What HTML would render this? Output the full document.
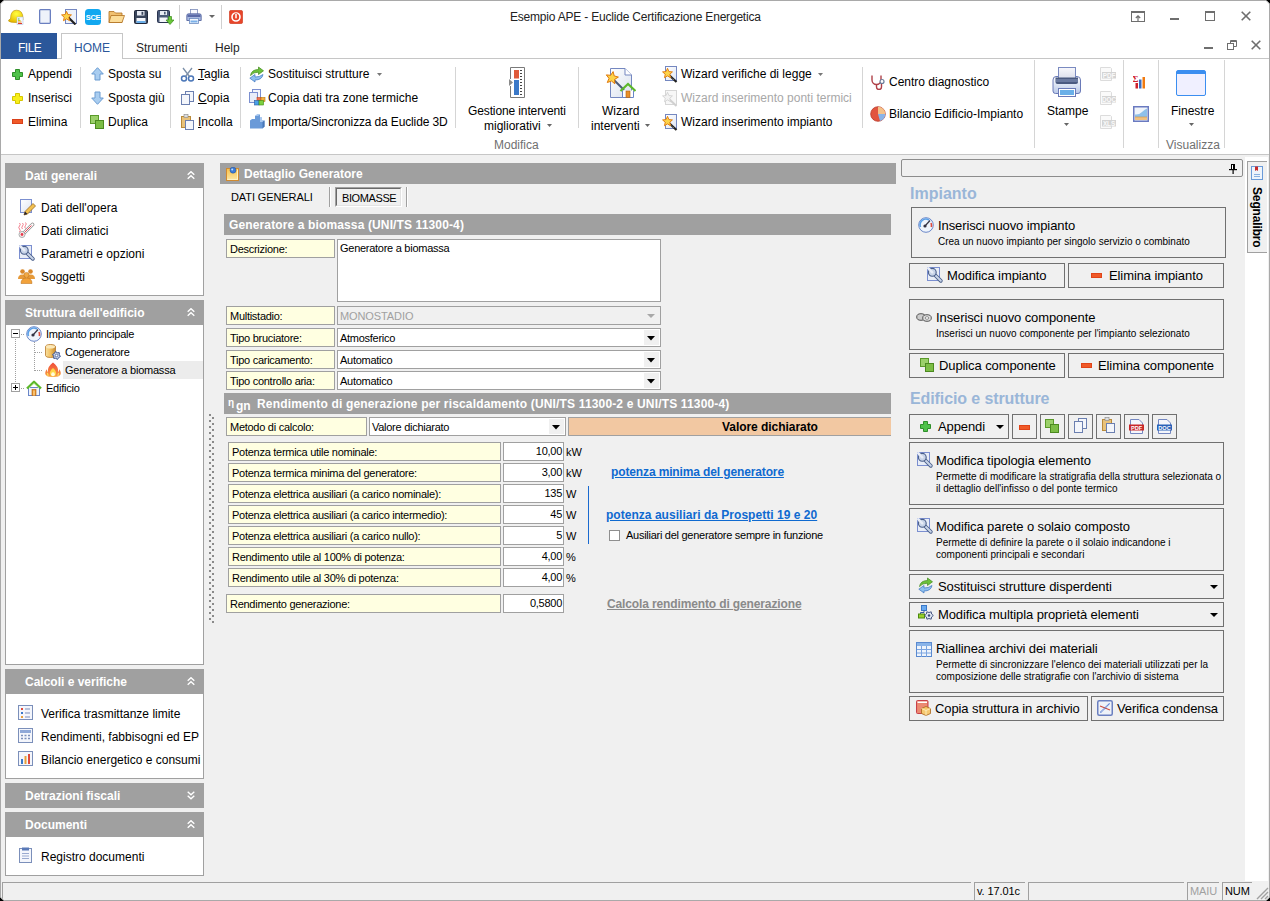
<!DOCTYPE html>
<html><head><meta charset="utf-8"><style>
html,body{margin:0;padding:0;}
body{width:1270px;height:901px;overflow:hidden;position:relative;background:#fff;font-family:"Liberation Sans", sans-serif;}
.a{position:absolute;box-sizing:border-box;}
.t{white-space:nowrap;}
</style></head><body>
<div class="a" style="left:0px;top:0px;width:1270px;height:901px;background:#fff;"></div>
<div class="a" style="left:1px;top:155px;width:1268px;height:746px;background:#f0f0f0;"></div>
<div class="a" style="left:1px;top:154px;width:1268px;height:1px;background:#c6c6c6;"></div>
<div class="a" style="left:0px;top:0px;width:1px;height:901px;background:#a9a9a9;"></div>
<div class="a" style="left:1269px;top:0px;width:1px;height:901px;background:#a9a9a9;"></div>
<div class="a" style="left:0px;top:0px;width:1270px;height:1px;background:#a9a9a9;"></div>
<div class="a" style="left:0px;top:900px;width:1270px;height:1px;background:#a9a9a9;"></div>
<div class="a t" style="left:510px;top:11px;font-size:12px;line-height:12px;color:#222;letter-spacing:-0.2px;">Esempio APE - Euclide Certificazione Energetica</div>
<svg class="a" style="left:8px;top:9px" width="16" height="16" viewBox="0 0 16 16"><defs><radialGradient id="hg" cx=".55" cy=".3" r=".7"><stop offset="0" stop-color="#ffff40"/><stop offset="1" stop-color="#e8b800"/></radialGradient></defs><path d="M.5 12 Q.5 10.5 2.5 10 Q2.5 1.2 8.5 1.2 Q15 1.2 15 9.5 L15 11 Q13 13.5 8 13.5 Q2 13.5 .5 12Z" fill="url(#hg)" stroke="#b89000" stroke-width=".6"/><rect x="9" y="8" width="6" height="7.5" fill="#f4f8ff" stroke="#a8b8d8" stroke-width=".5"/><rect x="10" y="9.5" width="1.5" height="1" fill="#3ab040"/><rect x="10" y="11" width="2.5" height="1" fill="#c8d020"/><rect x="10" y="12.5" width="3.5" height="1" fill="#f08a20"/><rect x="10" y="14" width="4" height="1" fill="#e03a2a"/></svg>
<svg class="a" style="left:39px;top:9px" width="12" height="15" viewBox="0 0 12 15"><rect x=".65" y=".65" width="10.7" height="13.7" rx=".8" fill="#eef2fa" stroke="#6a7fc0" stroke-width="1.3"/></svg>
<svg class="a" style="left:61px;top:9px" width="16" height="16" viewBox="0 0 16 16"><rect x="4.5" y=".5" width="11" height="14" fill="#eef2fa" stroke="#7487c0"/><path d="M7.5 8.5 L14.5 15.5" stroke="#222" stroke-width="2.2"/><path d="M5.50 2.30 L6.91 5.56 L10.45 5.89 L7.78 8.24 L8.56 11.71 L5.50 9.90 L2.44 11.71 L3.22 8.24 L0.55 5.89 L4.09 5.56Z" fill="#fcd34a" stroke="#e0780a" stroke-width=".9"/></svg>
<svg class="a" style="left:85px;top:9px" width="16" height="16" viewBox="0 0 16 16"><rect width="16" height="16" rx="3.5" fill="#12a8f0"/><text x="8" y="11.3" font-size="7.5" font-weight="bold" text-anchor="middle" fill="#fff" font-family="Liberation Sans" letter-spacing="-.3">SCE</text></svg>
<svg class="a" style="left:108px;top:10px" width="17" height="13" viewBox="0 0 17 13"><path d="M1 1.5 H6 L7.5 3 H14 V12.5 H1Z" fill="#f0c070" stroke="#b07020" stroke-width=".8"/><path d="M3 5.5 H16.5 L14 12.5 H1Z" fill="#fbdc98" stroke="#b07020" stroke-width=".8"/></svg>
<svg class="a" style="left:134px;top:10px" width="14" height="14" viewBox="0 0 14 14"><rect x=".5" y=".5" width="13" height="13" rx="1" fill="#38445a" stroke="#20283a"/><rect x="3" y="1" width="7.5" height="4.5" fill="#e8ecf4"/><rect x="7.5" y="1.8" width="1.8" height="3" fill="#38445a"/><rect x="2.5" y="8" width="9" height="5" fill="#f4f6fa"/><rect x="2.5" y="11" width="9" height="2" fill="#6aaee8"/></svg>
<svg class="a" style="left:157px;top:10px" width="17" height="15" viewBox="0 0 17 15"><rect x=".5" y=".5" width="12" height="12" rx="1" fill="#4a5a78" stroke="#2a3450"/><rect x="3" y="1" width="7" height="4" fill="#e8ecf4"/><rect x="7" y="1.8" width="1.6" height="2.6" fill="#4a5a78"/><rect x="2.5" y="7.5" width="8" height="4.5" fill="#f4f6fa"/><path d="M11.5 6.5 V10 H9 L13 14.5 L17 10 H14.5 V6.5Z" fill="#6ac83a" stroke="#3a8a1a" stroke-width=".7"/></svg>
<div class="a" style="left:179px;top:5px;width:1px;height:24px;background:#d0d0d0;"></div>
<svg class="a" style="left:186px;top:9px" width="16" height="15" viewBox="0 0 16 15"><rect x="4.5" y=".5" width="7" height="5" fill="#f8faff" stroke="#7a8ab8" stroke-width=".8"/><path d="M.8 6.5 Q.8 4.8 2.5 4.8 H13.5 Q15.2 4.8 15.2 6.5 V11.5 H.8Z" fill="#a8b8e0" stroke="#4a5a98" stroke-width=".8"/><rect x="1.5" y="5.5" width="13" height="2.5" fill="#5a6aa8"/><rect x="3.5" y="9.5" width="9" height="5" fill="#f4f8ff" stroke="#6a8ac0" stroke-width=".8"/><rect x="4.5" y="11.5" width="7" height="2" fill="#7ab0e8"/></svg>
<svg class="a" style="left:209px;top:14px" width="7" height="5" viewBox="0 0 7 5"><path d="M0 1 L6 1 L3 4Z" fill="#666"/></svg>
<div class="a" style="left:221px;top:5px;width:1px;height:24px;background:#d0d0d0;"></div>
<svg class="a" style="left:229px;top:10px" width="14" height="14" viewBox="0 0 14 14"><rect x=".3" y=".3" width="13.4" height="13.4" rx="2" fill="#e8452a" stroke="#c83a20" stroke-width=".6"/><circle cx="7" cy="7" r="4" fill="none" stroke="#fff" stroke-width="1.6"/><rect x="6" y="3.5" width="2" height="5" fill="#fff" stroke="#e8452a" stroke-width=".5"/></svg>
<svg class="a" style="left:1131px;top:11px" width="14" height="11" viewBox="0 0 14 11"><rect x=".5" y=".5" width="13" height="10" fill="none" stroke="#6e6e6e"/><rect x="1" y="1" width="12" height="1" fill="#6e6e6e"/><path d="M7 10 V5 M4.8 7 L7 4.8 L9.2 7" stroke="#6e6e6e" fill="none" stroke-width="1.2"/></svg>
<div class="a" style="left:1170px;top:18px;width:9px;height:2px;background:#6e6e6e;"></div>
<svg class="a" style="left:1205px;top:11px" width="10" height="10" viewBox="0 0 10 10"><rect x=".5" y=".5" width="9" height="9" fill="none" stroke="#6e6e6e"/><rect x="0" y="0" width="10" height="2" fill="#6e6e6e"/></svg>
<svg class="a" style="left:1241px;top:11px" width="10" height="10" viewBox="0 0 10 10"><path d="M.7 .7 L9.3 9.3 M9.3 .7 L.7 9.3" stroke="#6e6e6e" stroke-width="1.6"/></svg>
<div class="a" style="left:1204px;top:47px;width:9px;height:2px;background:#6e6e6e;"></div>
<svg class="a" style="left:1227px;top:40px" width="10" height="10" viewBox="0 0 10 10"><rect x=".5" y="3.5" width="6" height="6" fill="none" stroke="#6e6e6e"/><path d="M3.5 3 V.5 H9.5 V6.5 H7" fill="none" stroke="#6e6e6e"/><path d="M3.5 1.5 H9.5" stroke="#6e6e6e"/></svg>
<svg class="a" style="left:1251px;top:40px" width="10" height="10" viewBox="0 0 10 10"><path d="M.7 .7 L9.3 9.3 M9.3 .7 L.7 9.3" stroke="#6e6e6e" stroke-width="1.6"/></svg>
<div class="a" style="left:1px;top:33px;width:56px;height:26px;background:#2b579a;"></div>
<div class="a t" style="left:18px;top:42px;font-size:12px;line-height:12px;color:#fff;letter-spacing:-0.5px;">FILE</div>
<div class="a" style="left:61px;top:33px;width:62px;height:26px;border:1px solid #c6c6c6;border-bottom:none;background:#fff;"></div>
<div class="a" style="left:57px;top:58px;width:5px;height:1px;background:#c6c6c6;"></div>
<div class="a" style="left:123px;top:58px;width:1146px;height:1px;background:#c6c6c6;"></div>
<div class="a t" style="left:74px;top:42px;font-size:12px;line-height:12px;color:#2b579a;">HOME</div>
<div class="a t" style="left:136px;top:42px;font-size:12px;line-height:12px;color:#262626;">Strumenti</div>
<div class="a t" style="left:215px;top:42px;font-size:12px;line-height:12px;color:#262626;">Help</div>
<svg class="a" style="left:12px;top:69px" width="11" height="11" viewBox="0 0 11 11"><path d="M3.5 .5 H7.5 V3.5 H10.5 V7.5 H7.5 V10.5 H3.5 V7.5 H.5 V3.5 H3.5Z" fill="#4fc24a" stroke="#2f8f2a"/></svg>
<div class="a t" style="left:28px;top:68px;font-size:12px;line-height:12px;color:#000;">Appendi</div>
<svg class="a" style="left:12px;top:93px" width="11" height="11" viewBox="0 0 11 11"><path d="M3.5 .5 H7.5 V3.5 H10.5 V7.5 H7.5 V10.5 H3.5 V7.5 H.5 V3.5 H3.5Z" fill="#f7ef1a" stroke="#d6c600"/></svg>
<div class="a t" style="left:28px;top:92px;font-size:12px;line-height:12px;color:#000;">Inserisci</div>
<svg class="a" style="left:12px;top:119px" width="11" height="5" viewBox="0 0 11 5"><rect x=".5" y=".5" width="10" height="4" fill="#f05a28" stroke="#d9401a"/></svg>
<div class="a t" style="left:28px;top:116px;font-size:12px;line-height:12px;color:#000;">Elimina</div>
<div class="a" style="left:80px;top:67px;width:1px;height:61px;background:#d5d5d5;"></div>
<svg class="a" style="left:91px;top:67px" width="13" height="14" viewBox="0 0 13 14"><path d="M6.5 .7 L12.3 7 H9 V13 H4 V7 H.7Z" fill="#a9cdf0" stroke="#6a9bd1"/></svg>
<div class="a t" style="left:108px;top:68px;font-size:12px;line-height:12px;color:#000;">Sposta su</div>
<svg class="a" style="left:91px;top:91px" width="13" height="14" viewBox="0 0 13 14"><path d="M6.5 13.3 L12.3 7 H9 V1 H4 V7 H.7Z" fill="#a9cdf0" stroke="#6a9bd1"/></svg>
<div class="a t" style="left:108px;top:92px;font-size:12px;line-height:12px;color:#000;">Sposta giù</div>
<svg class="a" style="left:90px;top:115px" width="14" height="14" viewBox="0 0 14 14"><rect x=".5" y=".5" width="8" height="8" fill="#9bd06a" stroke="#5a9a2a"/><rect x="5.5" y="5.5" width="8" height="8" fill="#7cbd45" stroke="#4c8a20"/></svg>
<div class="a t" style="left:108px;top:116px;font-size:12px;line-height:12px;color:#000;">Duplica</div>
<div class="a" style="left:170px;top:67px;width:1px;height:61px;background:#d5d5d5;"></div>
<svg class="a" style="left:180px;top:67px" width="15" height="15" viewBox="0 0 15 15"><circle cx="4" cy="11.5" r="2.5" fill="none" stroke="#4a76b8" stroke-width="1.5"/><circle cx="11" cy="11.5" r="2.5" fill="none" stroke="#4a76b8" stroke-width="1.5"/><path d="M5.5 9.5 L12 1 M9.5 9.5 L3 1" stroke="#7b8fa8" stroke-width="1.3"/></svg>
<div class="a t" style="left:198px;top:68px;font-size:12px;line-height:12px;color:#000;"><u>T</u>aglia</div>
<svg class="a" style="left:181px;top:91px" width="13" height="14" viewBox="0 0 13 14"><rect x="4.5" y=".5" width="8" height="10" fill="#f4f6fb" stroke="#6b7fb0"/><rect x=".5" y="3.5" width="8" height="10" fill="#f4f6fb" stroke="#6b7fb0"/></svg>
<div class="a t" style="left:198px;top:92px;font-size:12px;line-height:12px;color:#000;"><u>C</u>opia</div>
<svg class="a" style="left:181px;top:114px" width="13" height="16" viewBox="0 0 13 16"><rect x=".5" y="2.5" width="9" height="11" fill="#e9c27a" stroke="#b98a3a"/><rect x="3" y=".5" width="4" height="3" fill="#ddd" stroke="#888" stroke-width=".6"/><rect x="4.5" y="6.5" width="8" height="9" fill="#f4f6fb" stroke="#6b7fb0"/></svg>
<div class="a t" style="left:198px;top:116px;font-size:12px;line-height:12px;color:#000;"><u>I</u>ncolla</div>
<div class="a" style="left:240px;top:67px;width:1px;height:61px;background:#d5d5d5;"></div>
<svg class="a" style="left:249px;top:66px" width="16" height="17" viewBox="0 0 16 17"><path d="M1.5 9.5 Q2.5 3.5 9.5 3.5 V1 L14.5 4.8 L9.5 8.5 V6.2 Q4.5 6 1.5 9.5Z" fill="#6cc23a" stroke="#3f8a1a" stroke-width=".7"/><path d="M14 8.5 Q13 14 6 14 V16 L.8 12.2 L6 8.5 V11 Q10.5 11.2 14 8.5Z" fill="#8ec0ee" stroke="#3a72c0" stroke-width=".7"/></svg>
<div class="a t" style="left:268px;top:68px;font-size:12px;line-height:12px;color:#000;">Sostituisci strutture</div>
<svg class="a" style="left:377px;top:73px" width="5" height="3" viewBox="0 0 5 3"><path d="M0 0 L5 0 L2.5 3Z" fill="#777"/></svg>
<svg class="a" style="left:249px;top:89px" width="17" height="17" viewBox="0 0 17 17"><rect x="3.5" y=".5" width="8" height="10" fill="#f4f6fb" stroke="#7b8fd0"/><rect x=".5" y="3.5" width="8" height="10" fill="#e8edf8" stroke="#7b8fd0"/><rect x="8" y="8.5" width="4" height="4" fill="#f07050" stroke="#b84a20" stroke-width=".6"/><rect x="12" y="8.5" width="4" height="4" fill="#f4b040" stroke="#b87a10" stroke-width=".6"/><rect x="5.5" y="11.5" width="4.5" height="4.5" fill="#4aa0e8" stroke="#2a5aa0" stroke-width=".6"/><rect x="10" y="11.5" width="4.5" height="4.5" fill="#7cd040" stroke="#3a8a10" stroke-width=".6"/></svg>
<div class="a t" style="left:268px;top:92px;font-size:12px;line-height:12px;color:#000;">Copia dati tra zone termiche</div>
<svg class="a" style="left:249px;top:114px" width="17" height="15" viewBox="0 0 17 15"><path d="M1 14.5 V6.5 L3 5 H6 V2 L8 .5 H11 V3.5 L13 3.5 V6.5 L15.5 6.5 V12.5 L13.5 14.5Z" fill="#6a9ad8"/><path d="M6 5 V2 L8 .5 H11 L9 2 H6 M13 6.5 L15.5 6.5 L13.5 8 H11 V3.5 L13 3.5" fill="#a8c8f0"/><path d="M13.5 8 V14.5 L15.5 12.5 V6.5Z" fill="#4a78b8"/></svg>
<div class="a t" style="left:268px;top:116px;font-size:12px;line-height:12px;color:#000;letter-spacing:-0.14px;">Importa/Sincronizza da Euclide 3D</div>
<div class="a" style="left:455px;top:67px;width:1px;height:61px;background:#d5d5d5;"></div>
<svg class="a" style="left:508px;top:67px" width="18" height="31" viewBox="0 0 18 31"><path d="M2.5 12 V.5 H16.5 V30.5 H2.5 V19" fill="#fff" stroke="#7a7a7a"/><rect x="6" y="3" width="5" height="8.5" fill="#e05a3a"/><rect x="6" y="13" width="5" height="15" fill="#3a78c8"/><rect x="12" y="3" width="2" height="1" fill="#444"/><rect x="12" y="6" width="2" height="1" fill="#444"/><rect x="12" y="9" width="2" height="1" fill="#444"/><rect x="12" y="12" width="2" height="1" fill="#444"/><rect x="12" y="15" width="2" height="1" fill="#444"/><rect x="12" y="18" width="2" height="1" fill="#444"/><rect x="12" y="21" width="2" height="1" fill="#444"/><rect x="12" y="24" width="2" height="1" fill="#444"/><rect x="12" y="27" width="2" height="1" fill="#444"/><path d="M1 12 L5 15.5 L1 19Z" fill="#8a8a8a"/></svg>
<div class="a t" style="left:468px;top:105px;font-size:12px;line-height:12px;color:#000;letter-spacing:-0.12px;">Gestione interventi</div>
<div class="a t" style="left:484px;top:120px;font-size:12px;line-height:12px;color:#000;">migliorativi</div>
<svg class="a" style="left:547px;top:124px" width="5" height="3" viewBox="0 0 5 3"><path d="M0 0 L5 0 L2.5 3Z" fill="#666"/></svg>
<div class="a t" style="left:494px;top:139px;font-size:12px;line-height:12px;color:#707070;">Modifica</div>
<div class="a" style="left:578px;top:67px;width:1px;height:61px;background:#d5d5d5;"></div>
<svg class="a" style="left:603px;top:67px" width="33" height="31" viewBox="0 0 33 31"><defs><linearGradient id="dg" x1="0" y1="0" x2="1" y2="1"><stop offset="0" stop-color="#fff"/><stop offset="1" stop-color="#d8e0ee"/></linearGradient></defs><path d="M7.5 1.5 H22 L28.5 8 V30.5 H7.5Z" fill="url(#dg)" stroke="#7487c0"/><path d="M22 1.5 V8 H28.5" fill="#fff" stroke="#7487c0"/><path d="M11 13 L21 23" stroke="#4a5a7a" stroke-width="2"/><path d="M10.1 4.6 L11.2 8.9 L15.4 10.1 L11.6 12.4 L11.8 16.8 L8.5 14.0 L4.3 15.5 L6.0 11.4 L3.3 7.9 L7.7 8.3Z" fill="#fcd34a" stroke="#e0780a" stroke-width="1"/><path d="M19.5 23.5 V30.5 H30.5 V23.5" fill="#fff" stroke="#6a86c8"/><path d="M17.5 24 L25 17 L32.5 24" fill="none" stroke="#5cb82a" stroke-width="2.2"/><rect x="23" y="24" width="4" height="6.5" fill="#e8902a" stroke="#b06010" stroke-width=".6"/></svg>
<div class="a t" style="left:602px;top:105px;font-size:12px;line-height:12px;color:#000;">Wizard</div>
<div class="a t" style="left:591px;top:120px;font-size:12px;line-height:12px;color:#000;">interventi</div>
<svg class="a" style="left:645px;top:124px" width="5" height="3" viewBox="0 0 5 3"><path d="M0 0 L5 0 L2.5 3Z" fill="#666"/></svg>
<svg class="a" style="left:662px;top:66px" width="16" height="17" viewBox="0 0 16 17"><defs><linearGradient id="wg" x1="0" y1="0" x2="1" y2="1"><stop offset="0" stop-color="#fff"/><stop offset="1" stop-color="#dfe6f4"/></linearGradient></defs><rect x="3.5" y=".5" width="11" height="14" fill="url(#wg)" stroke="#7487c0"/><path d="M7 9 L14.5 16" stroke="#222" stroke-width="2.2"/><path d="M8.5 10.5 L9.2 11.2 M10.8 12.8 L11.5 13.5" stroke="#bbb" stroke-width="1"/><path d="M5.50 2.30 L6.91 5.56 L10.45 5.89 L7.78 8.24 L8.56 11.71 L5.50 9.90 L2.44 11.71 L3.22 8.24 L0.55 5.89 L4.09 5.56Z" fill="#fcd34a" stroke="#e0780a" stroke-width=".9"/></svg>
<div class="a t" style="left:681px;top:68px;font-size:12px;line-height:12px;color:#000;">Wizard verifiche di legge</div>
<svg class="a" style="left:818px;top:73px" width="5" height="3" viewBox="0 0 5 3"><path d="M0 0 L5 0 L2.5 3Z" fill="#777"/></svg>
<svg class="a" style="left:662px;top:90px" width="16" height="17" viewBox="0 0 16 17"><rect x="3.5" y=".5" width="11" height="14" fill="#f7f7f7" stroke="#d6d6d6"/><path d="M7 9 L14.5 16" stroke="#d0d0d0" stroke-width="2"/><path d="M5.50 2.30 L6.91 5.56 L10.45 5.89 L7.78 8.24 L8.56 11.71 L5.50 9.90 L2.44 11.71 L3.22 8.24 L0.55 5.89 L4.09 5.56Z" fill="#f2f2f2" stroke="#cfcfcf" stroke-width=".8"/></svg>
<div class="a t" style="left:681px;top:92px;font-size:12px;line-height:12px;color:#a8a8a8;">Wizard inserimento ponti termici</div>
<svg class="a" style="left:662px;top:114px" width="16" height="17" viewBox="0 0 16 17"><defs><linearGradient id="wg" x1="0" y1="0" x2="1" y2="1"><stop offset="0" stop-color="#fff"/><stop offset="1" stop-color="#dfe6f4"/></linearGradient></defs><rect x="3.5" y=".5" width="11" height="14" fill="url(#wg)" stroke="#7487c0"/><path d="M7 9 L14.5 16" stroke="#222" stroke-width="2.2"/><path d="M8.5 10.5 L9.2 11.2 M10.8 12.8 L11.5 13.5" stroke="#bbb" stroke-width="1"/><path d="M5.50 2.30 L6.91 5.56 L10.45 5.89 L7.78 8.24 L8.56 11.71 L5.50 9.90 L2.44 11.71 L3.22 8.24 L0.55 5.89 L4.09 5.56Z" fill="#fcd34a" stroke="#e0780a" stroke-width=".9"/></svg>
<div class="a t" style="left:681px;top:116px;font-size:12px;line-height:12px;color:#000;">Wizard inserimento impianto</div>
<div class="a" style="left:862px;top:67px;width:1px;height:61px;background:#d5d5d5;"></div>
<svg class="a" style="left:870px;top:74px" width="16" height="16" viewBox="0 0 16 16"><path d="M2 1.5 V6 A4.5 4.5 0 0 0 11 6 V1.5" fill="none" stroke="#b04048" stroke-width="1.4"/><path d="M6.5 10.5 V13 A2.5 2.5 0 0 0 11.5 13 V9" fill="none" stroke="#b04048" stroke-width="1.4"/><circle cx="12" cy="7.5" r="2" fill="#fff" stroke="#6a7b99" stroke-width="1.2"/></svg>
<div class="a t" style="left:889px;top:76px;font-size:12px;line-height:12px;color:#000;">Centro diagnostico</div>
<svg class="a" style="left:870px;top:106px" width="16" height="16" viewBox="0 0 16 16"><circle cx="8" cy="8" r="7.3" fill="#e2553f" stroke="#b83a2a" stroke-width=".8"/><path d="M8 8 V.7 A7.3 7.3 0 0 1 15.3 8Z" fill="#f4c28a"/><path d="M8 8 H15.3 A7.3 7.3 0 0 1 10 15Z" fill="#8ab4e8"/></svg>
<div class="a t" style="left:889px;top:108px;font-size:12px;line-height:12px;color:#000;">Bilancio Edificio-Impianto</div>
<div class="a" style="left:1034px;top:60px;width:1px;height:88px;background:#d5d5d5;"></div>
<svg class="a" style="left:1051px;top:66px" width="32" height="32" viewBox="0 0 32 32"><defs><linearGradient id="pb" x1="0" y1="0" x2="0" y2="1"><stop offset="0" stop-color="#ffffff"/><stop offset="1" stop-color="#b8c8e8"/></linearGradient><linearGradient id="pp" x1="0" y1="0" x2="0" y2="1"><stop offset="0" stop-color="#f8f8fc"/><stop offset="1" stop-color="#d8dcea"/></linearGradient></defs><path d="M2 14 Q2 10.5 5 10.5 H26 Q29.5 10.5 29.5 14 V25 Q29.5 27.5 27 27.5 H4.5 Q2 27.5 2 25Z" fill="url(#pb)" stroke="#6a7ab8"/><rect x="7.5" y="1.5" width="17" height="12" fill="url(#pp)" stroke="#7a8ac0"/><path d="M4.5 11.5 H27 V16 Q27 18 25 18 H6.5 Q4.5 18 4.5 16Z" fill="#4a5a80"/><rect x="5" y="13" width="22" height="3" fill="#6a7aa0"/><rect x="7.5" y="22.5" width="17" height="8" fill="#fff" stroke="#6a7ab8"/><rect x="9" y="24" width="14" height="5" fill="#6ab0e8"/></svg>
<div class="a t" style="left:1047px;top:105px;font-size:12px;line-height:12px;color:#000;">Stampe</div>
<svg class="a" style="left:1064px;top:123px" width="5" height="3" viewBox="0 0 5 3"><path d="M0 0 L5 0 L2.5 3Z" fill="#666"/></svg>
<svg class="a" style="left:1100px;top:67px" width="16" height="15" viewBox="0 0 16 15"><path d="M.5 .5 H10.5 L11.5 1.5 V13.5 H.5Z" fill="#fafafa" stroke="#dcdcdc"/><rect x="2" y="5" width="14" height="6.5" fill="#d4d4d4"/><text x="9" y="10.6" font-size="6.3" font-weight="bold" text-anchor="middle" fill="#fafafa" font-family="Liberation Sans">PDF</text></svg>
<svg class="a" style="left:1100px;top:91px" width="16" height="15" viewBox="0 0 16 15"><path d="M.5 .5 H10.5 L11.5 1.5 V13.5 H.5Z" fill="#fafafa" stroke="#dcdcdc"/><rect x="2" y="5" width="14" height="6.5" fill="#d4d4d4"/><text x="9" y="10.6" font-size="6.3" font-weight="bold" text-anchor="middle" fill="#fafafa" font-family="Liberation Sans">DOC</text></svg>
<svg class="a" style="left:1100px;top:115px" width="16" height="15" viewBox="0 0 16 15"><path d="M.5 .5 H10.5 L11.5 1.5 V13.5 H.5Z" fill="#fafafa" stroke="#dcdcdc"/><rect x="2" y="5" width="14" height="6.5" fill="#d4d4d4"/><text x="9" y="10.6" font-size="6.3" font-weight="bold" text-anchor="middle" fill="#fafafa" font-family="Liberation Sans">XLS</text></svg>
<div class="a" style="left:1123px;top:60px;width:1px;height:88px;background:#d5d5d5;"></div>
<svg class="a" style="left:1133px;top:75px" width="16" height="14" viewBox="0 0 16 14"><text x="-.5" y="7" font-size="9" font-weight="bold" fill="#d0202a" font-family="Liberation Serif">Σ</text><rect x="2.5" y="8" width="2.5" height="5.5" fill="#d0202a"/><rect x="6" y="4.5" width="2.5" height="9" fill="#3a6cc0"/><rect x="9.5" y="2" width="2.5" height="11.5" fill="#f07a10"/></svg>
<svg class="a" style="left:1133px;top:106px" width="16" height="16" viewBox="0 0 16 16"><rect x=".75" y=".75" width="14.5" height="14.5" fill="#f0f4fa" stroke="#6a7ac0" stroke-width="1.5"/><path d="M2 14 V8.5 Q6 9 9 6 Q12 3 14 2.5 V14Z" fill="#8ec0ea"/><path d="M2 11 H14 V14 H2Z" fill="#f0c080"/><path d="M2 11 H14" stroke="#d09040" stroke-width=".6"/></svg>
<div class="a" style="left:1158px;top:60px;width:1px;height:88px;background:#d5d5d5;"></div>
<svg class="a" style="left:1176px;top:70px" width="30" height="26" viewBox="0 0 30 26"><rect x=".5" y=".5" width="29" height="25" rx="1.5" fill="#f0f0ff" stroke="#3b8ef0"/><rect x="1" y="1" width="28" height="3" fill="#3b8ef0"/></svg>
<div class="a t" style="left:1171px;top:105px;font-size:12px;line-height:12px;color:#000;">Finestre</div>
<svg class="a" style="left:1189px;top:123px" width="5" height="3" viewBox="0 0 5 3"><path d="M0 0 L5 0 L2.5 3Z" fill="#666"/></svg>
<div class="a t" style="left:1166px;top:139px;font-size:12px;line-height:12px;color:#707070;">Visualizza</div>
<div class="a" style="left:1224px;top:60px;width:1px;height:88px;background:#d5d5d5;"></div>
<div class="a" style="left:5px;top:163px;width:199px;height:25px;background:#a0a0a0;"></div>
<div class="a t" style="left:25px;top:170px;font-size:12px;line-height:12px;color:#fff;font-weight:bold;">Dati generali</div>
<svg class="a" style="left:187px;top:171px" width="8" height="9" viewBox="0 0 8 9"><path d="M.7 3.7 L4 .7 L7.3 3.7 M.7 7.7 L4 4.7 L7.3 7.7" fill="none" stroke="#fff" stroke-width="1.4"/></svg>
<div class="a" style="left:5px;top:188px;width:199px;height:108px;background:#fff;border:1px solid #a0a0a0;border-top:none;"></div>
<svg class="a" style="left:19px;top:199px" width="17" height="17" viewBox="0 0 17 17"><defs><linearGradient id="pg" x1="0" y1="0" x2="1" y2="1"><stop offset="0" stop-color="#fff"/><stop offset="1" stop-color="#dde4f2"/></linearGradient></defs><rect x="1.5" y=".5" width="11" height="13" fill="url(#pg)" stroke="#7b8fd0"/><path d="M5 16 L6 12.5 L14 4.5 L16.5 7 L8.5 15Z" fill="#f2c050" stroke="#9a6a20" stroke-width=".8"/><path d="M5 16 L6 12.5 L8.5 15Z" fill="#223"/></svg>
<div class="a t" style="left:41px;top:202px;font-size:12px;line-height:12px;color:#000;">Dati dell'opera</div>
<svg class="a" style="left:18px;top:222px" width="17" height="16" viewBox="0 0 17 16"><path d="M4 13 L14.5 2.5" stroke="#8a8a8a" stroke-width="3.6" stroke-linecap="round"/><path d="M4 13 L14.5 2.5" stroke="#fff" stroke-width="2.2" stroke-linecap="round"/><path d="M4 13 L13.5 3.5" stroke="#e83a4a" stroke-width=".9"/><circle cx="4" cy="12.5" r="3" fill="#f4f4f4" stroke="#999" stroke-width=".8"/><circle cx="4" cy="12.5" r="1.4" fill="#e83a4a"/><path d="M1.5 1 Q3 2.5 1.5 4 Q0 5.5 1.5 7 Q3 8.5 1.5 10 M4.5 1 Q6 2.5 4.5 4 Q3 5.5 4.5 7 M7.5 .5 Q9 2 7.5 3.5 Q6 5 7.5 6.5" stroke="#f06070" fill="none" stroke-width=".8"/></svg>
<div class="a t" style="left:41px;top:225px;font-size:12px;line-height:12px;color:#000;">Dati climatici</div>
<svg class="a" style="left:19px;top:245px" width="16" height="16" viewBox="0 0 16 16"><rect x=".5" y=".5" width="12" height="13" fill="#e8edf7" stroke="#7b8fd0"/><path d="M7.5 7.5 L13.8 13.8" stroke="#4a5f8a" stroke-width="3.8" stroke-linecap="round"/><path d="M7.5 7.5 L13.8 13.8" stroke="#c8d4e8" stroke-width="2" stroke-linecap="round"/><circle cx="5.3" cy="5.3" r="3.9" fill="#c8d4e8" stroke="#4a5f8a" stroke-width="1.1"/><path d="M1.2 1.2 L5.3 5.3" stroke="#e8edf7" stroke-width="2.4" stroke-linecap="round"/></svg>
<div class="a t" style="left:41px;top:248px;font-size:12px;line-height:12px;color:#000;">Parametri e opzioni</div>
<svg class="a" style="left:18px;top:268px" width="17" height="16" viewBox="0 0 17 16"><circle cx="4.5" cy="3.5" r="2.3" fill="#d9882a"/><circle cx="12.5" cy="3.5" r="2.3" fill="#d9882a"/><path d="M0 11 Q0 6.5 4.5 6.5 Q8 6.5 8 11Z M9 11 Q9 6.5 12.5 6.5 Q17 6.5 17 11Z" fill="#e69a3a"/><circle cx="8.5" cy="7" r="2.6" fill="#f0a844" stroke="#b86a10" stroke-width=".5"/><path d="M3 15.5 Q3 10 8.5 10 Q14 10 14 15.5Z" fill="#f2a23a" stroke="#b86a10" stroke-width=".5"/></svg>
<div class="a t" style="left:41px;top:271px;font-size:12px;line-height:12px;color:#000;">Soggetti</div>
<div class="a" style="left:5px;top:300px;width:199px;height:25px;background:#a0a0a0;"></div>
<div class="a t" style="left:25px;top:307px;font-size:12px;line-height:12px;color:#fff;font-weight:bold;">Struttura dell'edificio</div>
<svg class="a" style="left:187px;top:308px" width="8" height="9" viewBox="0 0 8 9"><path d="M.7 3.7 L4 .7 L7.3 3.7 M.7 7.7 L4 4.7 L7.3 7.7" fill="none" stroke="#fff" stroke-width="1.4"/></svg>
<div class="a" style="left:5px;top:325px;width:199px;height:340px;background:#fff;border:1px solid #a0a0a0;border-top:none;"></div>
<div class="a" style="left:11px;top:329px;width:9px;height:9px;border:1px solid #a0a0a0;background:#fff;"></div>
<div class="a" style="left:13px;top:333px;width:5px;height:1px;background:#000;"></div>
<div class="a" style="left:11px;top:383px;width:9px;height:9px;border:1px solid #a0a0a0;background:#fff;"></div>
<div class="a" style="left:13px;top:387px;width:5px;height:1px;background:#000;"></div>
<div class="a" style="left:15px;top:385px;width:1px;height:5px;background:#000;"></div>
<div class="a" style="left:15px;top:339px;width:1px;height:44px;background-image:repeating-linear-gradient(to bottom,#a0a0a0 0 1px,transparent 1px 2px);"></div>
<div class="a" style="left:21px;top:334px;width:4px;height:1px;background-image:repeating-linear-gradient(to right,#a0a0a0 0 1px,transparent 1px 2px);"></div>
<div class="a" style="left:21px;top:388px;width:4px;height:1px;background-image:repeating-linear-gradient(to right,#a0a0a0 0 1px,transparent 1px 2px);"></div>
<div class="a" style="left:34px;top:342px;width:1px;height:29px;background-image:repeating-linear-gradient(to bottom,#a0a0a0 0 1px,transparent 1px 2px);"></div>
<div class="a" style="left:35px;top:352px;width:8px;height:1px;background-image:repeating-linear-gradient(to right,#a0a0a0 0 1px,transparent 1px 2px);"></div>
<div class="a" style="left:35px;top:370px;width:8px;height:1px;background-image:repeating-linear-gradient(to right,#a0a0a0 0 1px,transparent 1px 2px);"></div>
<svg class="a" style="left:26px;top:326px" width="16" height="16" viewBox="0 0 16 16"><circle cx="8" cy="8" r="7.3" fill="#eef4fc" stroke="#6a86c8" stroke-width="1"/><path d="M2.5 10 A5.8 5.8 0 0 1 11 3" fill="none" stroke="#5aa0e8" stroke-width="1.6"/><path d="M13 6 A5.8 5.8 0 0 1 13.3 10" fill="none" stroke="#e04a3a" stroke-width="1.6"/><path d="M7 9 L12 3.5" stroke="#334" stroke-width="1.2"/><circle cx="7" cy="9" r="1.6" fill="#334"/></svg>
<div class="a t" style="left:46px;top:329px;font-size:11px;line-height:11px;color:#000;letter-spacing:-0.22px;">Impianto principale</div>
<svg class="a" style="left:45px;top:344px" width="16" height="16" viewBox="0 0 16 16"><defs><linearGradient id="cg" x1="0" x2="1"><stop offset="0" stop-color="#f8e0a0"/><stop offset=".5" stop-color="#f2c060"/><stop offset="1" stop-color="#c88a30"/></linearGradient></defs><path d="M.5 3 Q.5 .5 5.5 .5 Q10.5 .5 10.5 3 V11.5 Q10.5 13.5 5.5 13.5 Q.5 13.5 .5 11.5Z" fill="url(#cg)" stroke="#b8782a" stroke-width=".8"/><ellipse cx="5.5" cy="2.8" rx="4.6" ry="1.8" fill="#fbe8b8"/><path d="M15.4 12.5 L13.6 13.6 L12.5 15.4 L10.7 14.3 L8.7 14.3 L8.7 12.3 L7.6 10.5 L9.4 9.4 L10.5 7.6 L12.3 8.7 L14.3 8.7 L14.3 10.7Z" fill="#c8d4ea" stroke="#3a5290" stroke-width="1"/><circle cx="11.5" cy="11.5" r="1.3" fill="#fff" stroke="#3a5290" stroke-width=".7"/></svg>
<div class="a t" style="left:65px;top:347px;font-size:11px;line-height:11px;color:#000;letter-spacing:-0.22px;">Cogeneratore</div>
<div class="a" style="left:63px;top:361px;width:140px;height:18px;background:#ececec;"></div>
<svg class="a" style="left:45px;top:362px" width="16" height="15" viewBox="0 0 16 15"><defs><linearGradient id="fg" x1="0" y1="0" x2="0" y2="1"><stop offset="0" stop-color="#f04a3a"/><stop offset="1" stop-color="#f8a040"/></linearGradient></defs><path d="M8 0.5 Q14 5 13 10.5 Q14.5 8.5 14 7 Q16.5 10 15.5 12.5 Q14.5 15 8 15 Q1.5 15 .5 12.5 Q-.5 10 2 7 Q1.5 8.5 3 10.5 Q2 5 8 0.5Z" fill="url(#fg)"/><path d="M8 6 Q11.5 9 11 12 Q10.5 14.5 8 14.5 Q5.5 14.5 5 12 Q4.5 9 8 6Z" fill="#ffd84a"/><ellipse cx="8" cy="12.3" rx="1.8" ry="2" fill="#fffbe0"/><path d="M2.3 11 Q3.3 13 2.8 14" stroke="#ffe060" stroke-width="1.2" fill="none"/><path d="M13.7 11 Q12.7 13 13.2 14" stroke="#ffe060" stroke-width="1.2" fill="none"/></svg>
<div class="a t" style="left:65px;top:365px;font-size:11px;line-height:11px;color:#000;letter-spacing:-0.22px;">Generatore a biomassa</div>
<svg class="a" style="left:26px;top:380px" width="16" height="16" viewBox="0 0 16 16"><rect x="2.5" y="7.5" width="11" height="8" fill="#eef3fb" stroke="#6a86c8"/><path d="M1 8.5 L8 1.8 L15 8.5" fill="none" stroke="#5cb82a" stroke-width="2.4" stroke-linejoin="round"/><path d="M3 8 L8 3.3 L13 8" fill="none" stroke="#b8e890" stroke-width=".8"/><rect x="6" y="9.5" width="4" height="6" fill="#e8902a" stroke="#b06010" stroke-width=".6"/><rect x="7" y="10.5" width="2" height="5" fill="#f6c070"/></svg>
<div class="a t" style="left:46px;top:383px;font-size:11px;line-height:11px;color:#000;letter-spacing:-0.22px;">Edificio</div>
<div class="a" style="left:5px;top:669px;width:199px;height:25px;background:#a0a0a0;"></div>
<div class="a t" style="left:25px;top:676px;font-size:12px;line-height:12px;color:#fff;font-weight:bold;">Calcoli e verifiche</div>
<svg class="a" style="left:187px;top:677px" width="8" height="9" viewBox="0 0 8 9"><path d="M.7 3.7 L4 .7 L7.3 3.7 M.7 7.7 L4 4.7 L7.3 7.7" fill="none" stroke="#fff" stroke-width="1.4"/></svg>
<div class="a" style="left:5px;top:694px;width:199px;height:85px;background:#fff;border:1px solid #a0a0a0;border-top:none;"></div>
<svg class="a" style="left:18px;top:705px" width="16" height="16" viewBox="0 0 16 16"><rect x=".5" y=".5" width="14" height="14" fill="#f4f6fc" stroke="#7b8fba"/><rect x="3" y="3" width="2" height="2" fill="#e04a3a"/><rect x="3" y="7" width="2" height="2" fill="#3a78c8"/><rect x="3" y="11" width="2" height="2" fill="#e8a03a"/><path d="M7 4 H12 M7 8 H12 M7 12 H12" stroke="#7b8fba"/></svg>
<div class="a t" style="left:41px;top:708px;font-size:12px;line-height:12px;color:#000;">Verifica trasmittanze limite</div>
<svg class="a" style="left:18px;top:728px" width="16" height="16" viewBox="0 0 16 16"><rect x=".5" y=".5" width="14" height="14" fill="#f4f6fc" stroke="#7b8fba"/><rect x="2" y="2" width="11" height="3" fill="#8fa8d8"/><path d="M3 7.5 H5 M6.5 7.5 H8.5 M10 7.5 H12 M3 10.5 H5 M6.5 10.5 H8.5 M10 10.5 H12" stroke="#7b8fba" stroke-width="1.5"/></svg>
<div class="a t" style="left:41px;top:731px;font-size:12px;line-height:12px;color:#000;">Rendimenti, fabbisogni ed EP</div>
<svg class="a" style="left:18px;top:751px" width="16" height="16" viewBox="0 0 16 16"><rect x=".5" y=".5" width="14" height="14" fill="#f4f6fc" stroke="#7b8fba"/><rect x="3" y="8" width="2" height="5" fill="#3a78c8"/><rect x="6.5" y="5" width="2" height="8" fill="#e8a03a"/><rect x="10" y="3" width="2" height="10" fill="#e04a3a"/></svg>
<div class="a t" style="left:41px;top:754px;font-size:12px;line-height:12px;color:#000;">Bilancio energetico e consumi</div>
<div class="a" style="left:5px;top:783px;width:199px;height:25px;background:#a0a0a0;"></div>
<div class="a t" style="left:25px;top:790px;font-size:12px;line-height:12px;color:#fff;font-weight:bold;">Detrazioni fiscali</div>
<svg class="a" style="left:187px;top:791px" width="8" height="9" viewBox="0 0 8 9"><path d="M.7 .7 L4 3.7 L7.3 .7 M.7 4.7 L4 7.7 L7.3 4.7" fill="none" stroke="#fff" stroke-width="1.4"/></svg>
<div class="a" style="left:5px;top:812px;width:199px;height:25px;background:#a0a0a0;"></div>
<div class="a t" style="left:25px;top:819px;font-size:12px;line-height:12px;color:#fff;font-weight:bold;">Documenti</div>
<svg class="a" style="left:187px;top:820px" width="8" height="9" viewBox="0 0 8 9"><path d="M.7 3.7 L4 .7 L7.3 3.7 M.7 7.7 L4 4.7 L7.3 7.7" fill="none" stroke="#fff" stroke-width="1.4"/></svg>
<div class="a" style="left:5px;top:837px;width:199px;height:39px;background:#fff;border:1px solid #a0a0a0;border-top:none;"></div>
<svg class="a" style="left:19px;top:847px" width="14" height="16" viewBox="0 0 14 16"><rect x=".5" y="1.5" width="12" height="14" fill="#f4f6fc" stroke="#7b8fba"/><rect x="3" y=".5" width="7" height="3" fill="#5a7ab8"/><path d="M3 6.5 H10 M3 9 H10 M3 11.5 H10" stroke="#9aaad0"/></svg>
<div class="a t" style="left:41px;top:851px;font-size:12px;line-height:12px;color:#000;">Registro documenti</div>
<div class="a" style="left:220px;top:163px;width:676px;height:21px;background:#a0a0a0;"></div>
<svg class="a" style="left:226px;top:167px" width="14" height="14" viewBox="0 0 14 14"><defs><linearGradient id="ng" x1="0" y1="0" x2="0" y2="1"><stop offset="0" stop-color="#f8c048"/><stop offset="1" stop-color="#fbe8a8"/></linearGradient></defs><rect x=".5" y="1.5" width="12" height="12" fill="url(#ng)" stroke="#d08a30"/><path d="M1.5 12.5 H11.5 V2.5" fill="none" stroke="#fff6d0" stroke-width=".8"/><circle cx="7" cy="3.2" r="3" fill="#3a7ad8" stroke="#1a4a98" stroke-width=".5"/><circle cx="6.2" cy="2.5" r="1" fill="#bfe0ff"/></svg>
<div class="a t" style="left:244px;top:168px;font-size:12px;line-height:12px;color:#fff;font-weight:bold;">Dettaglio Generatore</div>
<div class="a t" style="left:231px;top:192px;font-size:11px;line-height:11px;color:#000;letter-spacing:-0.1px;">DATI GENERALI</div>
<div class="a" style="left:329px;top:187px;width:1px;height:20px;background:#a0a0a0;"></div>
<div class="a" style="left:330px;top:187px;width:1px;height:20px;background:#fff;"></div>
<div class="a" style="left:335px;top:187px;width:67px;height:20px;border:1px solid;border-color:#a0a0a0 #fff #fff #a0a0a0;background:#f0f0f0;"></div>
<div class="a" style="left:336px;top:188px;width:65px;height:18px;border:1px solid;border-color:#696969 #e3e3e3 #e3e3e3 #696969;"></div>
<div class="a t" style="left:342px;top:193px;font-size:11px;line-height:11px;color:#000;letter-spacing:-0.4px;">BIOMASSE</div>
<div class="a" style="left:406px;top:187px;width:1px;height:20px;background:#a0a0a0;"></div>
<div class="a" style="left:407px;top:187px;width:1px;height:20px;background:#fff;"></div>
<div class="a" style="left:224px;top:214px;width:667px;height:21px;background:#a0a0a0;"></div>
<div class="a t" style="left:229px;top:219px;font-size:12px;line-height:12px;color:#fff;font-weight:bold;letter-spacing:0.13px;">Generatore a biomassa (UNI/TS 11300-4)</div>
<div class="a" style="left:226px;top:239px;width:109px;height:19px;background:#ffffe1;border:1px solid #a0a0a0;"></div>
<div class="a t" style="left:230px;top:244px;font-size:11px;line-height:11px;color:#000;letter-spacing:-0.27px;">Descrizione:</div>
<div class="a" style="left:337px;top:239px;width:324px;height:63px;background:#fff;border:1px solid #a0a0a0;"></div>
<div class="a t" style="left:340px;top:243px;font-size:11px;line-height:11px;color:#000;letter-spacing:-0.27px;">Generatore a biomassa</div>
<div class="a" style="left:226px;top:306px;width:109px;height:19px;background:#ffffe1;border:1px solid #a0a0a0;"></div>
<div class="a t" style="left:230px;top:311px;font-size:11px;line-height:11px;color:#000;letter-spacing:-0.27px;">Multistadio:</div>
<div class="a" style="left:337px;top:306px;width:324px;height:19px;background:#f0f0f0;border:1px solid #a0a0a0;"></div>
<div class="a t" style="left:340px;top:311px;font-size:11px;line-height:11px;color:#a0a0a0;letter-spacing:-0.1px;">MONOSTADIO</div>
<svg class="a" style="left:647px;top:314px" width="8" height="5" viewBox="0 0 8 5"><path d="M0 0 L8 0 L4 4Z" fill="#a8a8a8"/></svg>
<div class="a" style="left:226px;top:328px;width:109px;height:19px;background:#ffffe1;border:1px solid #a0a0a0;"></div>
<div class="a t" style="left:230px;top:333px;font-size:11px;line-height:11px;color:#000;letter-spacing:-0.27px;">Tipo bruciatore:</div>
<div class="a" style="left:337px;top:328px;width:324px;height:19px;background:#fff;border:1px solid #a0a0a0;"></div>
<div class="a t" style="left:340px;top:333px;font-size:11px;line-height:11px;color:#000;letter-spacing:-0.27px;">Atmosferico</div>
<div class="a" style="left:644px;top:330px;width:15px;height:15px;background:#f0f0f0;"></div>
<svg class="a" style="left:647px;top:336px" width="8" height="5" viewBox="0 0 8 5"><path d="M0 0 L8 0 L4 4.5Z" fill="#000"/></svg>
<div class="a" style="left:226px;top:350px;width:109px;height:19px;background:#ffffe1;border:1px solid #a0a0a0;"></div>
<div class="a t" style="left:230px;top:355px;font-size:11px;line-height:11px;color:#000;letter-spacing:-0.27px;">Tipo caricamento:</div>
<div class="a" style="left:337px;top:350px;width:324px;height:19px;background:#fff;border:1px solid #a0a0a0;"></div>
<div class="a t" style="left:340px;top:355px;font-size:11px;line-height:11px;color:#000;letter-spacing:-0.27px;">Automatico</div>
<div class="a" style="left:644px;top:352px;width:15px;height:15px;background:#f0f0f0;"></div>
<svg class="a" style="left:647px;top:358px" width="8" height="5" viewBox="0 0 8 5"><path d="M0 0 L8 0 L4 4.5Z" fill="#000"/></svg>
<div class="a" style="left:226px;top:371px;width:109px;height:19px;background:#ffffe1;border:1px solid #a0a0a0;"></div>
<div class="a t" style="left:230px;top:376px;font-size:11px;line-height:11px;color:#000;letter-spacing:-0.27px;">Tipo controllo aria:</div>
<div class="a" style="left:337px;top:371px;width:324px;height:19px;background:#fff;border:1px solid #a0a0a0;"></div>
<div class="a t" style="left:340px;top:376px;font-size:11px;line-height:11px;color:#000;letter-spacing:-0.27px;">Automatico</div>
<div class="a" style="left:644px;top:373px;width:15px;height:15px;background:#f0f0f0;"></div>
<svg class="a" style="left:647px;top:379px" width="8" height="5" viewBox="0 0 8 5"><path d="M0 0 L8 0 L4 4.5Z" fill="#000"/></svg>
<div class="a" style="left:224px;top:393px;width:667px;height:21px;background:#a0a0a0;"></div>
<div class="a t" style="left:228px;top:398px;font-size:10px;line-height:10px;color:#fff;font-weight:bold;">η</div>
<div class="a t" style="left:236px;top:400px;font-size:12px;line-height:12px;color:#fff;font-weight:bold;">gn</div>
<div class="a t" style="left:257px;top:398px;font-size:12px;line-height:12px;color:#fff;font-weight:bold;letter-spacing:0.16px;">Rendimento di generazione per riscaldamento (UNI/TS 11300-2 e UNI/TS 11300-4)</div>
<div class="a" style="left:226px;top:417px;width:141px;height:19px;background:#ffffe1;border:1px solid #a0a0a0;"></div>
<div class="a t" style="left:230px;top:422px;font-size:11px;line-height:11px;color:#000;letter-spacing:-0.27px;">Metodo di calcolo:</div>
<div class="a" style="left:369px;top:417px;width:197px;height:19px;background:#fff;border:1px solid #a0a0a0;"></div>
<div class="a t" style="left:372px;top:422px;font-size:11px;line-height:11px;color:#000;letter-spacing:-0.27px;">Valore dichiarato</div>
<div class="a" style="left:549px;top:419px;width:15px;height:15px;background:#f0f0f0;"></div>
<svg class="a" style="left:552px;top:425px" width="8" height="5" viewBox="0 0 8 5"><path d="M0 0 L8 0 L4 4.5Z" fill="#000"/></svg>
<div class="a" style="left:568px;top:417px;width:323px;height:19px;background:#f2c8a2;border:1px solid #a0a0a0;border-right:none;"></div>
<div class="a t" style="left:722px;top:421px;font-size:12px;line-height:12px;color:#000;font-weight:bold;letter-spacing:-0.05px;">Valore dichiarato</div>
<div class="a" style="left:228px;top:442px;width:273px;height:19px;background:#ffffe1;border:1px solid #a0a0a0;"></div>
<div class="a t" style="left:232px;top:447px;font-size:11px;line-height:11px;color:#000;letter-spacing:-0.27px;">Potenza termica utile nominale:</div>
<div class="a" style="left:503px;top:442px;width:61px;height:19px;background:#fff;border:1px solid #a0a0a0;"></div>
<div class="a t" style="left:503px;top:446px;font-size:11px;line-height:11px;color:#000;letter-spacing:-0.27px;width:59px;text-align:right;">10,00</div>
<div class="a t" style="left:566px;top:447px;font-size:11px;line-height:11px;color:#000;letter-spacing:-0.1px;">kW</div>
<div class="a" style="left:228px;top:463px;width:273px;height:19px;background:#ffffe1;border:1px solid #a0a0a0;"></div>
<div class="a t" style="left:232px;top:468px;font-size:11px;line-height:11px;color:#000;letter-spacing:-0.27px;">Potenza termica minima del generatore:</div>
<div class="a" style="left:503px;top:463px;width:61px;height:19px;background:#fff;border:1px solid #a0a0a0;"></div>
<div class="a t" style="left:503px;top:467px;font-size:11px;line-height:11px;color:#000;letter-spacing:-0.27px;width:59px;text-align:right;">3,00</div>
<div class="a t" style="left:566px;top:468px;font-size:11px;line-height:11px;color:#000;letter-spacing:-0.1px;">kW</div>
<div class="a" style="left:228px;top:484px;width:273px;height:19px;background:#ffffe1;border:1px solid #a0a0a0;"></div>
<div class="a t" style="left:232px;top:489px;font-size:11px;line-height:11px;color:#000;letter-spacing:-0.27px;">Potenza elettrica ausiliari (a carico nominale):</div>
<div class="a" style="left:503px;top:484px;width:61px;height:19px;background:#fff;border:1px solid #a0a0a0;"></div>
<div class="a t" style="left:503px;top:488px;font-size:11px;line-height:11px;color:#000;letter-spacing:-0.27px;width:59px;text-align:right;">135</div>
<div class="a t" style="left:566px;top:489px;font-size:11px;line-height:11px;color:#000;letter-spacing:-0.1px;">W</div>
<div class="a" style="left:228px;top:505px;width:273px;height:19px;background:#ffffe1;border:1px solid #a0a0a0;"></div>
<div class="a t" style="left:232px;top:510px;font-size:11px;line-height:11px;color:#000;letter-spacing:-0.27px;">Potenza elettrica ausiliari (a carico intermedio):</div>
<div class="a" style="left:503px;top:505px;width:61px;height:19px;background:#fff;border:1px solid #a0a0a0;"></div>
<div class="a t" style="left:503px;top:509px;font-size:11px;line-height:11px;color:#000;letter-spacing:-0.27px;width:59px;text-align:right;">45</div>
<div class="a t" style="left:566px;top:510px;font-size:11px;line-height:11px;color:#000;letter-spacing:-0.1px;">W</div>
<div class="a" style="left:228px;top:526px;width:273px;height:19px;background:#ffffe1;border:1px solid #a0a0a0;"></div>
<div class="a t" style="left:232px;top:531px;font-size:11px;line-height:11px;color:#000;letter-spacing:-0.27px;">Potenza elettrica ausiliari (a carico nullo):</div>
<div class="a" style="left:503px;top:526px;width:61px;height:19px;background:#fff;border:1px solid #a0a0a0;"></div>
<div class="a t" style="left:503px;top:530px;font-size:11px;line-height:11px;color:#000;letter-spacing:-0.27px;width:59px;text-align:right;">5</div>
<div class="a t" style="left:566px;top:531px;font-size:11px;line-height:11px;color:#000;letter-spacing:-0.1px;">W</div>
<div class="a" style="left:228px;top:547px;width:273px;height:19px;background:#ffffe1;border:1px solid #a0a0a0;"></div>
<div class="a t" style="left:232px;top:552px;font-size:11px;line-height:11px;color:#000;letter-spacing:-0.27px;">Rendimento utile al 100% di potenza:</div>
<div class="a" style="left:503px;top:547px;width:61px;height:19px;background:#fff;border:1px solid #a0a0a0;"></div>
<div class="a t" style="left:503px;top:551px;font-size:11px;line-height:11px;color:#000;letter-spacing:-0.27px;width:59px;text-align:right;">4,00</div>
<div class="a t" style="left:566px;top:552px;font-size:11px;line-height:11px;color:#000;letter-spacing:-0.1px;">%</div>
<div class="a" style="left:228px;top:568px;width:273px;height:19px;background:#ffffe1;border:1px solid #a0a0a0;"></div>
<div class="a t" style="left:232px;top:573px;font-size:11px;line-height:11px;color:#000;letter-spacing:-0.27px;">Rendimento utile al 30% di potenza:</div>
<div class="a" style="left:503px;top:568px;width:61px;height:19px;background:#fff;border:1px solid #a0a0a0;"></div>
<div class="a t" style="left:503px;top:572px;font-size:11px;line-height:11px;color:#000;letter-spacing:-0.27px;width:59px;text-align:right;">4,00</div>
<div class="a t" style="left:566px;top:573px;font-size:11px;line-height:11px;color:#000;letter-spacing:-0.1px;">%</div>
<div class="a" style="left:226px;top:594px;width:275px;height:19px;background:#ffffe1;border:1px solid #a0a0a0;"></div>
<div class="a t" style="left:230px;top:599px;font-size:11px;line-height:11px;color:#000;letter-spacing:-0.27px;">Rendimento generazione:</div>
<div class="a" style="left:503px;top:594px;width:61px;height:19px;background:#fff;border:1px solid #a0a0a0;"></div>
<div class="a t" style="left:503px;top:598px;font-size:11px;line-height:11px;color:#000;letter-spacing:-0.27px;width:59px;text-align:right;">0,5800</div>
<div class="a" style="left:209px;top:414px;width:2px;height:210px;background-image:repeating-linear-gradient(to bottom,#8a8a8a 0 2px,transparent 2px 6px);"></div>
<div class="a" style="left:212px;top:417px;width:2px;height:207px;background-image:repeating-linear-gradient(to bottom,#8a8a8a 0 2px,transparent 2px 6px);"></div>
<div class="a t" style="left:611px;top:466px;font-size:12px;line-height:12px;color:#0f6ad0;font-weight:bold;letter-spacing:-0.13px;text-decoration:underline;">potenza minima del generatore</div>
<div class="a" style="left:588px;top:486px;width:1px;height:58px;background:#1a6ad0;"></div>
<div class="a t" style="left:606px;top:509px;font-size:12px;line-height:12px;color:#0f6ad0;font-weight:bold;letter-spacing:0.03px;text-decoration:underline;">potenza ausiliari da Prospetti 19 e 20</div>
<div class="a" style="left:609px;top:530px;width:11px;height:11px;border:1px solid #8f8f8f;background:#fff;"></div>
<div class="a t" style="left:626px;top:530px;font-size:11px;line-height:11px;color:#000;letter-spacing:-0.27px;">Ausiliari del generatore sempre in funzione</div>
<div class="a t" style="left:607px;top:598px;font-size:12px;line-height:12px;color:#8a8a8a;font-weight:bold;letter-spacing:-0.13px;text-decoration:underline;">Calcola rendimento di generazione</div>
<div class="a" style="left:1245px;top:157px;width:23px;height:724px;background:#fff;"></div>
<div class="a" style="left:1247px;top:161px;width:20px;height:92px;background:#f0f0f0;border:1px solid #a0a0a0;border-right:none;"></div>
<svg class="a" style="left:1251px;top:166px" width="13" height="14" viewBox="0 0 13 14"><rect x=".5" y=".5" width="11" height="13" fill="#eef4fc" stroke="#6a9ad8"/><path d="M4 .5 V5 L5.5 4 L7 5 V.5" fill="#c82a2a"/><path d="M3 8.5 H9 M3 10.5 H9" stroke="#8ab0e0"/></svg>
<div class="a t" style="left:1264px;top:187px;font-size:12px;line-height:14px;font-weight:bold;color:#000;transform-origin:0 0;transform:rotate(90deg);letter-spacing:-0.15px;">Segnalibro</div>
<div class="a" style="left:901px;top:159px;width:342px;height:18px;border:1px solid #8c8c8c;border-radius:2px;background:#f0f0f0;"></div>
<svg class="a" style="left:1229px;top:164px" width="8" height="10" viewBox="0 0 8 10"><rect x="2.5" y=".5" width="3" height="5" fill="#fff" stroke="#000"/><rect x="4" y="1" width="1" height="5" fill="#000"/><rect x="0" y="5" width="8" height="1.2" fill="#000"/><rect x="3.5" y="6" width="1.2" height="4" fill="#000"/></svg>
<div class="a t" style="left:910px;top:186px;font-size:16px;line-height:16px;color:#9ab6d8;font-weight:bold;">Impianto</div>
<div class="a" style="left:911px;top:207px;width:315px;height:51px;border:1px solid #707070;background:#f0f0f0;"></div>
<svg class="a" style="left:918px;top:217px" width="16" height="16" viewBox="0 0 16 16"><circle cx="8" cy="8" r="7.3" fill="#eef4fc" stroke="#6a86c8" stroke-width="1"/><path d="M2.5 10 A5.8 5.8 0 0 1 11 3" fill="none" stroke="#5aa0e8" stroke-width="1.6"/><path d="M13 6 A5.8 5.8 0 0 1 13.3 10" fill="none" stroke="#e04a3a" stroke-width="1.6"/><path d="M7 9 L12 3.5" stroke="#334" stroke-width="1.2"/><circle cx="7" cy="9" r="1.6" fill="#334"/></svg>
<div class="a t" style="left:938px;top:219px;font-size:13px;line-height:13px;color:#000;letter-spacing:-0.1px;">Inserisci nuovo impianto</div>
<div class="a t" style="left:938px;top:237px;font-size:10px;line-height:10px;color:#000;">Crea un nuovo impianto per singolo servizio o combinato</div>
<div class="a" style="left:909px;top:263px;width:156px;height:25px;border:1px solid #707070;background:#f0f0f0;"></div>
<svg class="a" style="left:927px;top:267px" width="17" height="17" viewBox="0 0 17 17"><rect x=".5" y=".5" width="12" height="13" fill="#e8edf7" stroke="#7b8fd0"/><path d="M7.5 7.5 L13.8 13.8" stroke="#4a5f8a" stroke-width="3.8" stroke-linecap="round"/><path d="M7.5 7.5 L13.8 13.8" stroke="#c8d4e8" stroke-width="2" stroke-linecap="round"/><circle cx="5.3" cy="5.3" r="3.9" fill="#c8d4e8" stroke="#4a5f8a" stroke-width="1.1"/><path d="M1.2 1.2 L5.3 5.3" stroke="#e8edf7" stroke-width="2.4" stroke-linecap="round"/></svg>
<div class="a t" style="left:947px;top:269px;font-size:13px;line-height:13px;color:#000;letter-spacing:-0.1px;">Modifica impianto</div>
<div class="a" style="left:1068px;top:263px;width:156px;height:25px;border:1px solid #707070;background:#f0f0f0;"></div>
<svg class="a" style="left:1091px;top:273px" width="11" height="5" viewBox="0 0 11 5"><rect x=".5" y=".5" width="10" height="4" fill="#f05a28" stroke="#e04418"/></svg>
<div class="a t" style="left:1109px;top:269px;font-size:13px;line-height:13px;color:#000;letter-spacing:-0.1px;">Elimina impianto</div>
<div class="a" style="left:909px;top:299px;width:315px;height:51px;border:1px solid #707070;background:#f0f0f0;"></div>
<svg class="a" style="left:916px;top:312px" width="16" height="10" viewBox="0 0 16 10"><ellipse cx="5" cy="5" rx="4.3" ry="3.3" fill="#ccc" stroke="#555"/><ellipse cx="11" cy="6" rx="4.3" ry="3.3" fill="#ddd" stroke="#555"/><ellipse cx="11" cy="6" rx="1.8" ry="1.3" fill="#fff" stroke="#555" stroke-width=".6"/></svg>
<div class="a t" style="left:936px;top:311px;font-size:13px;line-height:13px;color:#000;letter-spacing:-0.1px;">Inserisci nuovo componente</div>
<div class="a t" style="left:936px;top:329px;font-size:10px;line-height:10px;color:#000;">Inserisci un nuovo componente per l'impianto selezionato</div>
<div class="a" style="left:909px;top:353px;width:156px;height:25px;border:1px solid #707070;background:#f0f0f0;"></div>
<svg class="a" style="left:920px;top:358px" width="14" height="14" viewBox="0 0 14 14"><rect x=".5" y=".5" width="8" height="8" fill="#9bd06a" stroke="#5a9a2a"/><rect x="5.5" y="5.5" width="8" height="8" fill="#7cbd45" stroke="#4c8a20"/></svg>
<div class="a t" style="left:939px;top:359px;font-size:13px;line-height:13px;color:#000;letter-spacing:-0.1px;">Duplica componente</div>
<div class="a" style="left:1068px;top:353px;width:156px;height:25px;border:1px solid #707070;background:#f0f0f0;"></div>
<svg class="a" style="left:1081px;top:363px" width="11" height="5" viewBox="0 0 11 5"><rect x=".5" y=".5" width="10" height="4" fill="#f05a28" stroke="#e04418"/></svg>
<div class="a t" style="left:1098px;top:359px;font-size:13px;line-height:13px;color:#000;letter-spacing:-0.1px;">Elimina componente</div>
<div class="a t" style="left:910px;top:391px;font-size:16px;line-height:16px;color:#9ab6d8;font-weight:bold;letter-spacing:-0.1px;">Edificio e strutture</div>
<div class="a" style="left:909px;top:414px;width:100px;height:25px;border:1px solid #707070;background:#f0f0f0;"></div>
<svg class="a" style="left:920px;top:421px" width="11" height="11" viewBox="0 0 11 11"><path d="M3.5 .5 H7.5 V3.5 H10.5 V7.5 H7.5 V10.5 H3.5 V7.5 H.5 V3.5 H3.5Z" fill="#4fc24a" stroke="#2f8f2a"/></svg>
<div class="a t" style="left:938px;top:420px;font-size:13px;line-height:13px;color:#000;letter-spacing:-0.1px;">Appendi</div>
<svg class="a" style="left:996px;top:425px" width="8" height="4" viewBox="0 0 8 4"><path d="M0 0 L8 0 L4 4Z" fill="#000"/></svg>
<div class="a" style="left:1012px;top:414px;width:25px;height:25px;border:1px solid #707070;background:#f0f0f0;"></div>
<svg class="a" style="left:1019px;top:425px" width="11" height="5" viewBox="0 0 11 5"><rect x=".5" y=".5" width="10" height="4" fill="#f05a28" stroke="#e04418"/></svg>
<div class="a" style="left:1040px;top:414px;width:25px;height:25px;border:1px solid #707070;background:#f0f0f0;"></div>
<svg class="a" style="left:1045px;top:419px" width="14" height="14" viewBox="0 0 14 14"><rect x=".5" y=".5" width="8" height="8" fill="#9bd06a" stroke="#5a9a2a"/><rect x="5.5" y="5.5" width="8" height="8" fill="#7cbd45" stroke="#4c8a20"/></svg>
<div class="a" style="left:1068px;top:414px;width:25px;height:25px;border:1px solid #707070;background:#f0f0f0;"></div>
<svg class="a" style="left:1074px;top:418px" width="13" height="15" viewBox="0 0 13 15"><rect x="4.5" y=".5" width="8" height="10" fill="#f4f6fb" stroke="#6b7fb0"/><rect x=".5" y="3.5" width="8" height="11" fill="#f4f6fb" stroke="#6b7fb0"/></svg>
<div class="a" style="left:1096px;top:414px;width:25px;height:25px;border:1px solid #707070;background:#f0f0f0;"></div>
<svg class="a" style="left:1102px;top:417px" width="14" height="16" viewBox="0 0 14 16"><rect x=".5" y="2.5" width="9" height="11" fill="#e9c27a" stroke="#b98a3a"/><rect x="3" y=".5" width="4" height="3" fill="#ddd" stroke="#888" stroke-width=".6"/><rect x="4.5" y="6.5" width="8" height="9" fill="#f4f6fb" stroke="#6b7fb0"/></svg>
<div class="a" style="left:1124px;top:414px;width:25px;height:25px;border:1px solid #707070;background:#f0f0f0;"></div>
<svg class="a" style="left:1128px;top:419px" width="17" height="15" viewBox="0 0 17 15"><path d="M2.5 .5 H11 L14.5 4 V14.5 H2.5Z" fill="#f4f6fb" stroke="#7487c0"/><rect x="1" y="5.5" width="15" height="6" fill="#c8282a"/><text x="8.5" y="10.6" font-size="5.6" font-weight="bold" text-anchor="middle" fill="#fff" font-family="Liberation Sans">PDF</text></svg>
<div class="a" style="left:1152px;top:414px;width:25px;height:25px;border:1px solid #707070;background:#f0f0f0;"></div>
<svg class="a" style="left:1156px;top:419px" width="17" height="15" viewBox="0 0 17 15"><path d="M2.5 .5 H11 L14.5 4 V14.5 H2.5Z" fill="#f4f6fb" stroke="#7487c0"/><rect x="1" y="5.5" width="15" height="6" fill="#2a62b8"/><text x="8.5" y="10.6" font-size="5.6" font-weight="bold" text-anchor="middle" fill="#fff" font-family="Liberation Sans">DOC</text></svg>
<div class="a" style="left:909px;top:442px;width:315px;height:63px;border:1px solid #707070;background:#f0f0f0;"></div>
<svg class="a" style="left:917px;top:452px" width="17" height="17" viewBox="0 0 17 17"><rect x=".5" y=".5" width="12" height="13" fill="#e8edf7" stroke="#7b8fd0"/><path d="M7.5 7.5 L13.8 13.8" stroke="#4a5f8a" stroke-width="3.8" stroke-linecap="round"/><path d="M7.5 7.5 L13.8 13.8" stroke="#c8d4e8" stroke-width="2" stroke-linecap="round"/><circle cx="5.3" cy="5.3" r="3.9" fill="#c8d4e8" stroke="#4a5f8a" stroke-width="1.1"/><path d="M1.2 1.2 L5.3 5.3" stroke="#e8edf7" stroke-width="2.4" stroke-linecap="round"/></svg>
<div class="a t" style="left:936px;top:454px;font-size:13px;line-height:13px;color:#000;letter-spacing:-0.1px;">Modifica tipologia elemento</div>
<div class="a t" style="left:936px;top:472px;font-size:10px;line-height:10px;color:#000;">Permette di modificare la stratigrafia della struttura selezionata o</div>
<div class="a t" style="left:936px;top:484px;font-size:10px;line-height:10px;color:#000;">il dettaglio dell'infisso o del ponte termico</div>
<div class="a" style="left:909px;top:508px;width:315px;height:63px;border:1px solid #707070;background:#f0f0f0;"></div>
<svg class="a" style="left:917px;top:518px" width="17" height="17" viewBox="0 0 17 17"><rect x=".5" y=".5" width="12" height="13" fill="#e8edf7" stroke="#7b8fd0"/><path d="M7.5 7.5 L13.8 13.8" stroke="#4a5f8a" stroke-width="3.8" stroke-linecap="round"/><path d="M7.5 7.5 L13.8 13.8" stroke="#c8d4e8" stroke-width="2" stroke-linecap="round"/><circle cx="5.3" cy="5.3" r="3.9" fill="#c8d4e8" stroke="#4a5f8a" stroke-width="1.1"/><path d="M1.2 1.2 L5.3 5.3" stroke="#e8edf7" stroke-width="2.4" stroke-linecap="round"/></svg>
<div class="a t" style="left:936px;top:520px;font-size:13px;line-height:13px;color:#000;letter-spacing:-0.1px;">Modifica parete o solaio composto</div>
<div class="a t" style="left:936px;top:538px;font-size:10px;line-height:10px;color:#000;">Permette di definire la parete o il solaio indicandone i</div>
<div class="a t" style="left:936px;top:550px;font-size:10px;line-height:10px;color:#000;">componenti principali e secondari</div>
<div class="a" style="left:909px;top:574px;width:315px;height:25px;border:1px solid #707070;background:#f0f0f0;"></div>
<svg class="a" style="left:918px;top:577px" width="16" height="17" viewBox="0 0 16 17"><path d="M1.5 9.5 Q2.5 3.5 9.5 3.5 V1 L14.5 4.8 L9.5 8.5 V6.2 Q4.5 6 1.5 9.5Z" fill="#6cc23a" stroke="#3f8a1a" stroke-width=".7"/><path d="M14 8.5 Q13 14 6 14 V16 L.8 12.2 L6 8.5 V11 Q10.5 11.2 14 8.5Z" fill="#8ec0ee" stroke="#3a72c0" stroke-width=".7"/></svg>
<div class="a t" style="left:938px;top:580px;font-size:13px;line-height:13px;color:#000;letter-spacing:-0.1px;">Sostituisci strutture disperdenti</div>
<svg class="a" style="left:1210px;top:585px" width="8" height="4" viewBox="0 0 8 4"><path d="M0 0 L8 0 L4 4Z" fill="#000"/></svg>
<div class="a" style="left:909px;top:602px;width:315px;height:25px;border:1px solid #707070;background:#f0f0f0;"></div>
<svg class="a" style="left:917px;top:605px" width="17" height="16" viewBox="0 0 17 16"><rect x="4.5" y=".5" width="5" height="5" fill="#6aaaf0" stroke="#3a78c8"/><path d="M7 5.5 V7.5 H3.5 V9" fill="none" stroke="#3a5a98"/><rect x="1.5" y="9" width="6" height="4" fill="#9ad02a" stroke="#4a8a10"/><path d="M16.3 10.5 L14.6 12.0 L14.2 14.2 L12.0 13.5 L9.9 14.2 L9.4 12.0 L7.7 10.5 L9.4 9.0 L9.8 6.8 L12.0 7.5 L14.2 6.8 L14.6 9.0Z" fill="#dfe6f2" stroke="#3a4a78" stroke-width=".9"/><circle cx="12" cy="10.5" r="1.2" fill="#3a4a78"/></svg>
<div class="a t" style="left:938px;top:608px;font-size:13px;line-height:13px;color:#000;letter-spacing:-0.1px;">Modifica multipla proprietà elementi</div>
<svg class="a" style="left:1210px;top:613px" width="8" height="4" viewBox="0 0 8 4"><path d="M0 0 L8 0 L4 4Z" fill="#000"/></svg>
<div class="a" style="left:909px;top:630px;width:315px;height:63px;border:1px solid #707070;background:#f0f0f0;"></div>
<svg class="a" style="left:916px;top:642px" width="16" height="15" viewBox="0 0 16 15"><rect x=".5" y=".5" width="15" height="14" fill="#eef4fc" stroke="#5a8ad0"/><rect x="1" y="1" width="14" height="3" fill="#8ab4e8"/><path d="M1 7.5 H15 M1 11 H15 M5.5 4 V15 M10.5 4 V15" stroke="#7aa4e0"/></svg>
<div class="a t" style="left:936px;top:642px;font-size:13px;line-height:13px;color:#000;letter-spacing:-0.1px;">Riallinea archivi dei materiali</div>
<div class="a t" style="left:936px;top:660px;font-size:10px;line-height:10px;color:#000;">Permette di sincronizzare l'elenco dei materiali utilizzati per la</div>
<div class="a t" style="left:936px;top:672px;font-size:10px;line-height:10px;color:#000;">composizione delle stratigrafie con l'archivio di sistema</div>
<div class="a" style="left:909px;top:696px;width:179px;height:25px;border:1px solid #707070;background:#f0f0f0;"></div>
<svg class="a" style="left:916px;top:700px" width="15" height="16" viewBox="0 0 15 16"><rect x=".5" y=".5" width="11.5" height="13" rx="1" fill="#e8806a" stroke="#c8404a"/><rect x="1.5" y="1.5" width="9.5" height="1.5" fill="#fff"/><rect x="1.5" y="3.5" width="9.5" height="9.5" fill="#ec8a72"/><path d="M5.5 8.5 L10 6.5 L14.5 8.5 V13.5 L10 15.5 L5.5 13.5Z" fill="#f6c870" stroke="#a8641a" stroke-width=".8"/><path d="M5.5 8.5 L10 10.5 L14.5 8.5 M10 10.5 V15.5" fill="none" stroke="#fff3c8" stroke-width=".8"/></svg>
<div class="a t" style="left:935px;top:702px;font-size:13px;line-height:13px;color:#000;letter-spacing:-0.1px;">Copia struttura in archivio</div>
<div class="a" style="left:1091px;top:696px;width:133px;height:25px;border:1px solid #707070;background:#f0f0f0;"></div>
<svg class="a" style="left:1097px;top:700px" width="16" height="16" viewBox="0 0 16 16"><rect x=".75" y=".75" width="14.5" height="14.5" rx="1.5" fill="#eef2f8" stroke="#6a7fc0" stroke-width="1.5"/><path d="M3 6 L13 10" stroke="#d04a3a" stroke-width="1.1"/><path d="M3.5 12.5 L12.5 3.5" stroke="#2a5ac8" stroke-width="1.2" stroke-dasharray="1 .5"/></svg>
<div class="a t" style="left:1117px;top:702px;font-size:13px;line-height:13px;color:#000;letter-spacing:-0.1px;">Verifica condensa</div>
<div class="a" style="left:1px;top:881px;width:1268px;height:19px;background:#f0f0f0;"></div>
<div class="a" style="left:2px;top:882px;width:969px;height:18px;border-top:1px solid #a0a0a0;border-left:1px solid #a0a0a0;"></div>
<div class="a" style="left:974px;top:882px;width:51px;height:18px;border-top:1px solid #a0a0a0;border-left:1px solid #a0a0a0;"></div>
<div class="a t" style="left:977px;top:886px;font-size:11px;line-height:11px;color:#000;letter-spacing:-0.1px;">v. 17.01c</div>
<div class="a" style="left:1028px;top:882px;width:156px;height:18px;border-top:1px solid #a0a0a0;border-left:1px solid #a0a0a0;"></div>
<div class="a" style="left:1187px;top:882px;width:32px;height:18px;border-top:1px solid #a0a0a0;border-left:1px solid #a0a0a0;"></div>
<div class="a t" style="left:1190px;top:886px;font-size:11px;line-height:11px;color:#a0a0a0;letter-spacing:-0.1px;">MAIU</div>
<div class="a" style="left:1222px;top:882px;width:30px;height:18px;border-top:1px solid #a0a0a0;border-left:1px solid #a0a0a0;"></div>
<div class="a t" style="left:1225px;top:886px;font-size:11px;line-height:11px;color:#000;letter-spacing:-0.1px;">NUM</div>
<svg class="a" style="left:1256px;top:887px" width="13" height="13" viewBox="0 0 13 13"><path d="M1 12 L12 1 M5 12 L12 5 M9 12 L12 9" stroke="#a0a0a0" stroke-width="1.4"/></svg>
<svg class="a" style="left:0px;top:0px" width="5" height="5" viewBox="0 0 5 5"><path d="M0 0 H4 L0 4Z" fill="#000"/><path d="M4 0.5 L0.5 4" stroke="#c8c8c8" stroke-width="1"/></svg>
<svg class="a" style="left:1265px;top:0px" width="5" height="5" viewBox="0 0 5 5"><path d="M5 0 H1 L5 4Z" fill="#000"/><path d="M1 0.5 L4.5 4" stroke="#c8c8c8" stroke-width="1"/></svg>
<svg class="a" style="left:0px;top:896px" width="5" height="5" viewBox="0 0 5 5"><path d="M0 5 H4 L0 1Z" fill="#000"/><path d="M4 4.5 L0.5 1" stroke="#c8c8c8" stroke-width="1"/></svg>
<svg class="a" style="left:1265px;top:896px" width="5" height="5" viewBox="0 0 5 5"><path d="M5 5 H1 L5 1Z" fill="#000"/><path d="M1 4.5 L4.5 1" stroke="#c8c8c8" stroke-width="1"/></svg>
</body></html>
